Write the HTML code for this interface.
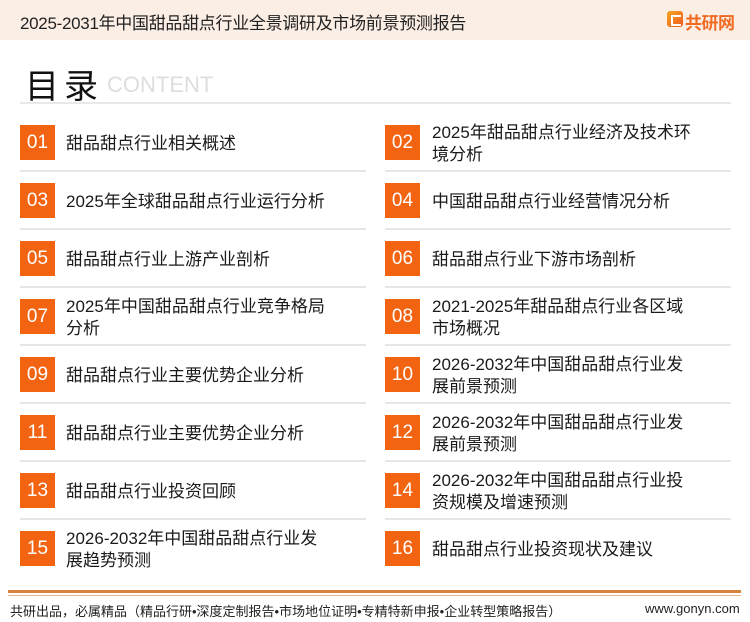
<!DOCTYPE html>
<html><head><meta charset="utf-8"><style>
*{margin:0;padding:0;box-sizing:border-box}
body{width:750px;height:622px;background:#fff;font-family:"Liberation Sans","Noto Sans CJK SC",sans-serif;position:relative;overflow:hidden;color:#1a1a1a}
.hdr{position:absolute;left:0;top:0;width:750px;height:40px;background:#fbeee5}
.hdr .t{position:absolute;left:20px;top:9px;font-size:17px;color:#222;letter-spacing:-0.3px}
.logo{position:absolute;left:667px;top:11px;width:16px;height:16px;border-radius:3px;background:linear-gradient(135deg,#f5a623,#ef5a1e)}
.logo:after{content:"";position:absolute;left:4px;top:4px;width:8px;height:7px;border:2px solid #fff;border-right:none;background:transparent}
.lt{position:absolute;left:685px;top:9px;font-size:17px;font-weight:bold;color:#f06a22;letter-spacing:-0.5px}
.ttl{position:absolute;left:25px;top:59px;font-size:34px;color:#111;letter-spacing:5px}
.ct{position:absolute;left:107px;top:72px;font-size:22px;color:#dedede}
.tl{position:absolute;left:20px;top:102px;width:711px;height:2px;background:#e9e9e9}
.n{position:absolute;width:35px;height:35px;background:#f26411;color:#fff;font-size:19px;text-align:center;line-height:36px}
.tx{position:absolute;font-size:17px;line-height:22px;color:#1a1a1a}
.sep{position:absolute;height:2px;background:#e6e6e6;width:346px}
.f1{position:absolute;left:8px;top:590px;width:733px;height:3px;background:#d8843f}
.f2{position:absolute;left:8px;top:595px;width:733px;height:1px;background:#e6b68a}
.ft{position:absolute;left:10px;top:601px;font-size:13px;color:#222}
.fu{position:absolute;left:645px;top:601px;font-size:13px;color:#222}
</style></head><body>
<div class="hdr"><div class="t">2025-2031年中国甜品甜点行业全景调研及市场前景预测报告</div><div class="logo"></div><div class="lt">共研网</div></div>
<div class="ttl">目录</div><div class="ct">CONTENT</div><div class="tl"></div>

<div class="n" style="left:20px;top:125px">01</div><div class="tx" style="left:66px;top:133px">甜品甜点行业相关概述</div>
<div class="n" style="left:385px;top:125px">02</div><div class="tx" style="left:432px;top:122px">2025年甜品甜点行业经济及技术环<br>境分析</div>
<div class="sep" style="left:20px;top:170px"></div><div class="sep" style="left:385px;top:170px"></div>

<div class="n" style="left:20px;top:183px">03</div><div class="tx" style="left:66px;top:191px">2025年全球甜品甜点行业运行分析</div>
<div class="n" style="left:385px;top:183px">04</div><div class="tx" style="left:432px;top:191px">中国甜品甜点行业经营情况分析</div>
<div class="sep" style="left:20px;top:228px"></div><div class="sep" style="left:385px;top:228px"></div>

<div class="n" style="left:20px;top:241px">05</div><div class="tx" style="left:66px;top:249px">甜品甜点行业上游产业剖析</div>
<div class="n" style="left:385px;top:241px">06</div><div class="tx" style="left:432px;top:249px">甜品甜点行业下游市场剖析</div>
<div class="sep" style="left:20px;top:286px"></div><div class="sep" style="left:385px;top:286px"></div>

<div class="n" style="left:20px;top:299px">07</div><div class="tx" style="left:66px;top:296px">2025年中国甜品甜点行业竞争格局<br>分析</div>
<div class="n" style="left:385px;top:299px">08</div><div class="tx" style="left:432px;top:296px">2021-2025年甜品甜点行业各区域<br>市场概况</div>
<div class="sep" style="left:20px;top:344px"></div><div class="sep" style="left:385px;top:344px"></div>

<div class="n" style="left:20px;top:357px">09</div><div class="tx" style="left:66px;top:365px">甜品甜点行业主要优势企业分析</div>
<div class="n" style="left:385px;top:357px">10</div><div class="tx" style="left:432px;top:354px">2026-2032年中国甜品甜点行业发<br>展前景预测</div>
<div class="sep" style="left:20px;top:402px"></div><div class="sep" style="left:385px;top:402px"></div>

<div class="n" style="left:20px;top:415px">11</div><div class="tx" style="left:66px;top:423px">甜品甜点行业主要优势企业分析</div>
<div class="n" style="left:385px;top:415px">12</div><div class="tx" style="left:432px;top:412px">2026-2032年中国甜品甜点行业发<br>展前景预测</div>
<div class="sep" style="left:20px;top:460px"></div><div class="sep" style="left:385px;top:460px"></div>

<div class="n" style="left:20px;top:473px">13</div><div class="tx" style="left:66px;top:481px">甜品甜点行业投资回顾</div>
<div class="n" style="left:385px;top:473px">14</div><div class="tx" style="left:432px;top:470px">2026-2032年中国甜品甜点行业投<br>资规模及增速预测</div>
<div class="sep" style="left:20px;top:518px"></div><div class="sep" style="left:385px;top:518px"></div>

<div class="n" style="left:20px;top:531px">15</div><div class="tx" style="left:66px;top:528px">2026-2032年中国甜品甜点行业发<br>展趋势预测</div>
<div class="n" style="left:385px;top:531px">16</div><div class="tx" style="left:432px;top:539px">甜品甜点行业投资现状及建议</div>

<div class="f1"></div><div class="f2"></div>
<div class="ft">共研出品，必属精品（精品行研•深度定制报告•市场地位证明•专精特新申报•企业转型策略报告）</div>
<div class="fu">www.gonyn.com</div>
</body></html>
